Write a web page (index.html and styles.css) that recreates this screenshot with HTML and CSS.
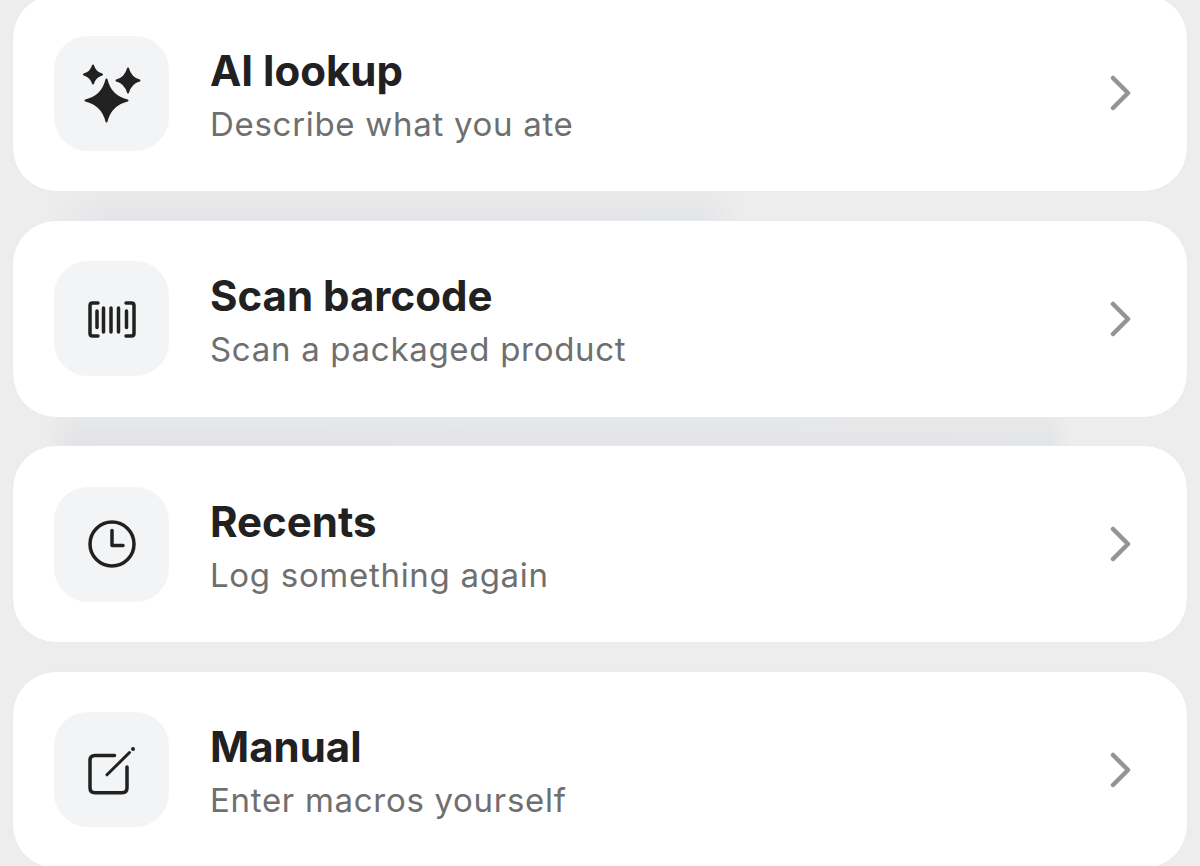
FILE: index.html
```html
<!DOCTYPE html>
<html lang="en">
<head>
    <meta charset="UTF-8">
    <meta name="viewport" content="width=device-width, initial-scale=1.0">
    <title>Log food</title>
    <link rel="stylesheet" href="styles.css">
</head>
<body>
    <div class="list">
        <div class="card">
            <div class="tile">
                <svg class="icon icon-fill" viewBox="0 0 58 58">
                    <path d="M10 1.500 Q12 8.500 19 10.500 Q12 12.500 10 19.500 Q8 12.500 1 10.500 Q8 8.500 10 1.500 Z"/>
                    <path d="M45 4.500 Q47.500 14 56.500 16.500 Q47.500 19 45 28.500 Q42.500 19 33.500 16.500 Q42.500 14 45 4.500 Z"/>
                    <path d="M23.500 15.500 Q27.500 32.500 44.500 36.500 Q27.500 40.500 23.500 57.500 Q19.500 40.500 2.500 36.500 Q19.500 32.500 23.500 15.500 Z"/>
                </svg>
            </div>
            <div class="text">
                <div class="title">AI lookup</div>
                <div class="sub">Describe what you ate</div>
            </div>
            <svg class="chevron" viewBox="0 0 22 36"><path d="M3 3 L18 18 L3 33"/></svg>
        </div>
        <div class="band band-short"></div>
        <div class="card">
            <div class="tile">
                <svg class="icon" viewBox="0 0 58 58">
                    <path d="M15 13 H9.500 Q7 13 7 15.500 V43.500 Q7 46 9.500 46 H15"/>
                    <path d="M43 13 H48.500 Q51 13 51 15.500 V43.500 Q51 46 48.500 46 H43"/>
                    <path d="M14 21 V37.500 M20.500 18 V42 M28 18 V42 M35.500 18 V42 M43.500 21 V37.500"/>
                </svg>
            </div>
            <div class="text">
                <div class="title">Scan barcode</div>
                <div class="sub">Scan a packaged product</div>
            </div>
            <svg class="chevron" viewBox="0 0 22 36"><path d="M3 3 L18 18 L3 33"/></svg>
        </div>
        <div class="band band-long"></div>
        <div class="card">
            <div class="tile">
                <svg class="icon" viewBox="0 0 58 58">
                    <circle cx="29" cy="29" r="22"/>
                    <path d="M29 15.500 V30.500 H40"/>
                </svg>
            </div>
            <div class="text">
                <div class="title">Recents</div>
                <div class="sub">Log something again</div>
            </div>
            <svg class="chevron" viewBox="0 0 22 36"><path d="M3 3 L18 18 L3 33"/></svg>
        </div>
        <div class="band"></div>
        <div class="card">
            <div class="tile">
                <svg class="icon" viewBox="0 0 58 58">
                    <path d="M31.500 14.500 H12 Q7 14.500 7 19.500 V46.700 Q7 51.700 12 51.700 H39 Q44 51.700 44 46.700 V26"/>
                    <path class="pen" d="M24 33.800 L46.500 11.500"/>
                    <circle class="dot" cx="50" cy="8" r="1.200"/>
                </svg>
            </div>
            <div class="text">
                <div class="title">Manual</div>
                <div class="sub">Enter macros yourself</div>
            </div>
            <svg class="chevron" viewBox="0 0 22 36"><path d="M3 3 L18 18 L3 33"/></svg>
        </div>
    </div>
</body>
</html>
```

FILE: styles.css
```css
html, body {
    height: 100%;
}
body {
    margin: 0;
    overflow: hidden;
    background-color: #ededed;
    font-family: Inter, "Noto Sans", sans-serif;
}
.list {
    display: flex;
    flex-direction: column;
    margin-top: -6px;
    padding: 0 12px;
}
.card {
    display: flex;
    align-items: center;
    flex: none;
    box-sizing: border-box;
    height: 198px;
    padding: 0 55px 0 41px;
    background-color: #fff;
    border: 1px solid #e9eaef;
    border-radius: 44px;
}
.tile {
    display: flex;
    align-items: center;
    justify-content: center;
    flex: none;
    width: 115px;
    height: 115px;
    background-color: #f3f4f6;
    border-radius: 34px;
}
.icon {
    width: 58px;
    height: 58px;
    overflow: visible;
    fill: none;
    stroke: #212121;
    stroke-width: 3.500;
    stroke-linecap: round;
    stroke-linejoin: round;
}
.icon-fill {
    fill: #212121;
    stroke-width: 2;
}
.pen {
    stroke-width: 3;
}
.dot {
    fill: #212121;
    stroke-width: 1.500;
}
.text {
    flex: 1;
    margin-left: 41px;
    padding-top: 7px;
}
.title {
    font-size: 42px;
    font-weight: 700;
    line-height: 52px;
    color: #212121;
}
.sub {
    margin-top: 2px;
    font-size: 33px;
    line-height: 50px;
    letter-spacing: 0.7px;
    color: #6f6f6f;
}
.chevron {
    flex: none;
    width: 22px;
    height: 36px;
    fill: none;
    stroke: #949494;
    stroke-width: 4.500;
    stroke-linecap: round;
    stroke-linejoin: round;
}
.band {
    flex: none;
    height: 27.500px;
    margin: 0 32px;
}
.band-short {
    margin-right: 443px;
    background:
        linear-gradient(180deg, rgba(237, 237, 237, 0.6), rgba(237, 237, 237, 0)),
        linear-gradient(90deg, #ededed, #e3e4e6 10%, #e4e5e7 94%, #ededed);
}
.band-long {
    margin-right: 118px;
    background:
        linear-gradient(180deg, rgba(237, 237, 237, 0.5), rgba(237, 237, 237, 0)),
        linear-gradient(90deg, #ededed, #e2e3e5 3%, #e3e4e6 98%, #ededed);
}
```
